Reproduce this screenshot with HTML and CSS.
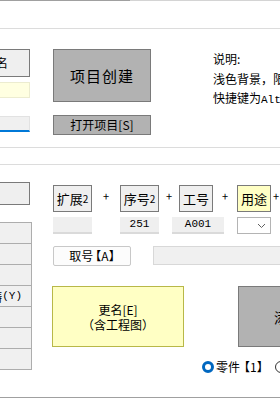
FILE: index.html
```html
<!DOCTYPE html>
<html lang="zh-CN">
<head>
  <meta charset="UTF-8">
  <title>项目管理</title>
  <link rel="stylesheet" href="styles.css">
</head>
<body>
  <div class="topline"></div>

  <!-- 项目区 -->
  <section class="group group-a">
    <div class="side">
      <div class="btn btn-name">重命名</div>
      <div class="input yellow"></div>
      <div class="input focus"></div>
    </div>
    <div class="mid">
      <div class="btn gray big">项目创建</div>
      <div class="btn gray open">打开项目[S]</div>
    </div>
    <div class="notes">
      <p>说明:</p>
      <p>浅色背景，限移动</p>
      <p>快捷键为<span class="mono">Alt+</span>命令</p>
    </div>
  </section>

  <!-- 编号区 -->
  <section class="group group-b">
    <div class="side">
      <div class="btn side-btn"></div>
      <div class="list">
        <div class="row"></div>
        <div class="row"></div>
        <div class="row"></div>
        <div class="row labeled">浇铸<span class="mono">(Y)</span></div>
        <div class="row"></div>
        <div class="row"></div>
        <div class="row"></div>
      </div>
    </div>
    <div class="main">
      <div class="chain">
        <div class="btn part w39">扩展<small>2</small></div>
        <span class="plus p28">+</span>
        <div class="btn part w39">序号<small>2</small></div>
        <span class="plus p20">+</span>
        <div class="btn part w34">工号</div>
        <span class="plus p24">+</span>
        <div class="btn part w34 yellow-btn">用途</div>
        <span class="plus p10">+</span>
      </div>
      <div class="fields">
        <div class="field w39"></div>
        <div class="field w39 f-seq">251</div>
        <div class="field f-job">A001</div>
        <div class="combo">
          <svg width="9" height="6" viewBox="0 0 9 6"><path d="M1 1 L4.5 4.5 L8 1" fill="none" stroke="#606060" stroke-width="1"/></svg>
        </div>
      </div>
      <div class="take-row">
        <div class="btn take">取号<span class="tight">【A】</span></div>
        <div class="bar"></div>
      </div>
      <div class="big-row">
        <div class="rename">
          <div>更名[E]</div>
          <div>（含工程图）</div>
        </div>
        <div class="btn gray add">添加</div>
      </div>
      <div class="radios">
        <label class="radio"><svg width="12" height="12" viewBox="0 0 12 12"><circle cx="6" cy="6" r="4.5" fill="#fff" stroke="#0067c0" stroke-width="3"/></svg>零件<span class="tight">【1】</span></label>
        <label class="radio off"><svg width="12" height="12" viewBox="0 0 12 12"><circle cx="6" cy="6" r="5.5" fill="#fff" stroke="#333" stroke-width="1"/></svg>装配</label>
      </div>
    </div>
  </section>
</body>
</html>
```

FILE: styles.css
```css
* { box-sizing: border-box; }

body {
  margin: 0;
  width: 280px;
  height: 400px;
  overflow: hidden;
  background: #fff;
  font-family: "Noto Sans CJK SC", sans-serif;
  font-size: 12px;
  color: #000;
}

p { margin: 0; }
.mono { font-family: "Liberation Mono", monospace; font-size: 11px; }
.tight { font-feature-settings: "halt"; margin-left: 2px; }

.topline {
  height: 1px;
  background: linear-gradient(to right, #a0a0a0 130px, #d4d4d4 130px);
}

.group { display: flex; align-items: flex-start; border-top: 1px solid #dcdcdc; }
.group > * { flex: none; }
.group-a { margin-top: 27px; height: 120px; padding-top: 20px; border-bottom: 1px solid #dcdcdc; }
.group-b { margin-top: 16px; height: 234px; padding-top: 17px; border-bottom: 1px solid #a0a0a0; }

.btn {
  display: flex;
  align-items: center;
  justify-content: center;
  border: 1px solid #7a7a7a;
  background: #efefef;
  white-space: nowrap;
  line-height: 1;
  flex: none;
}
.btn.gray { background: #b2b2b2; }

.side { margin-left: -50px; width: 82px; display: flex; flex-direction: column; }
.btn-name { width: 80px; height: 28px; }
.input { width: 80px; height: 16px; border: 1px solid #e2e2e2; }
.input.yellow { margin-top: 5px; background: #ffffe1; border-color: #ececd0; }
.input.focus { margin-top: 18px; background: #f0f0f0; border-bottom: 2px solid #0078d7; }

.mid { margin-left: 21px; width: 98px; }
.big { height: 53px; font-size: 15px; letter-spacing: 1px; }
.open { margin-top: 13px; height: 20px; }

.notes { margin-left: 62px; line-height: 19.5px; white-space: nowrap; }

.side-btn { width: 80px; height: 23px; }
.list { margin-top: 17px; border: 1px solid #adadad; border-bottom: none; }
.row {
  height: 21px;
  border-bottom: 1px solid #adadad;
  background: #f0f0f0;
  display: flex;
  align-items: center;
  justify-content: center;
  white-space: nowrap;
}
.row.labeled { justify-content: flex-end; padding-right: 9px; }

.main { margin-left: 21px; width: 300px; }
.main > div > * { flex: none; }

.chain { display: flex; align-items: center; margin-top: 3px; }
.part { height: 27px; font-size: 13px; }
.part small { font-size: 10px; }
.w39 { width: 39px; }
.w34 { width: 34px; }
.yellow-btn { background: #ffffc4; }
.plus { text-align: center; font-size: 11px; line-height: 1; margin-top: -4px; }
.p28 { width: 28px; }
.p20 { width: 20px; }
.p24 { width: 24px; }
.p10 { width: 10px; }

.fields { display: flex; margin-top: 5px; }
.field {
  height: 17px;
  background: #efefef;
  border-bottom: 2px solid #dadada;
  text-align: center;
  font-family: "Liberation Mono", monospace;
  font-size: 11px;
  line-height: 15px;
}
.f-seq { margin-left: 28px; }
.f-job { margin-left: 13px; width: 52px; }
.combo {
  margin-left: 13px;
  width: 34px;
  height: 17px;
  border: 1px solid #b4b4b4;
  background: #fff;
  display: flex;
  align-items: center;
  justify-content: flex-end;
  padding-right: 4px;
}

.take-row { display: flex; margin-top: 12px; }
.take { width: 78px; height: 20px; background: #fcfcfc; border-color: #c8c8c8; border-radius: 2px; }
.bar { margin-left: 22px; width: 140px; height: 19px; background: #f0f0f0; border: 1px solid #d8d8d8; }

.big-row { display: flex; margin-top: 20px; }
.rename {
  margin-left: -1px;
  width: 132px;
  height: 61px;
  background: #ffffc4;
  border: 1px solid #b8b848;
  font-size: 12px;
  line-height: 15px;
  text-align: center;
  display: flex;
  flex-direction: column;
  justify-content: center;
  gap: 0;
}
.add { margin-left: 54px; width: 100px; height: 61px; font-size: 14px; }

.radios { display: flex; margin-top: 13px; margin-left: 149px; }
.radio { display: flex; align-items: center; gap: 2px; line-height: 14px; white-space: nowrap; }
.radio svg { flex: none; }
.radio.off { margin-left: 12px; }
```
